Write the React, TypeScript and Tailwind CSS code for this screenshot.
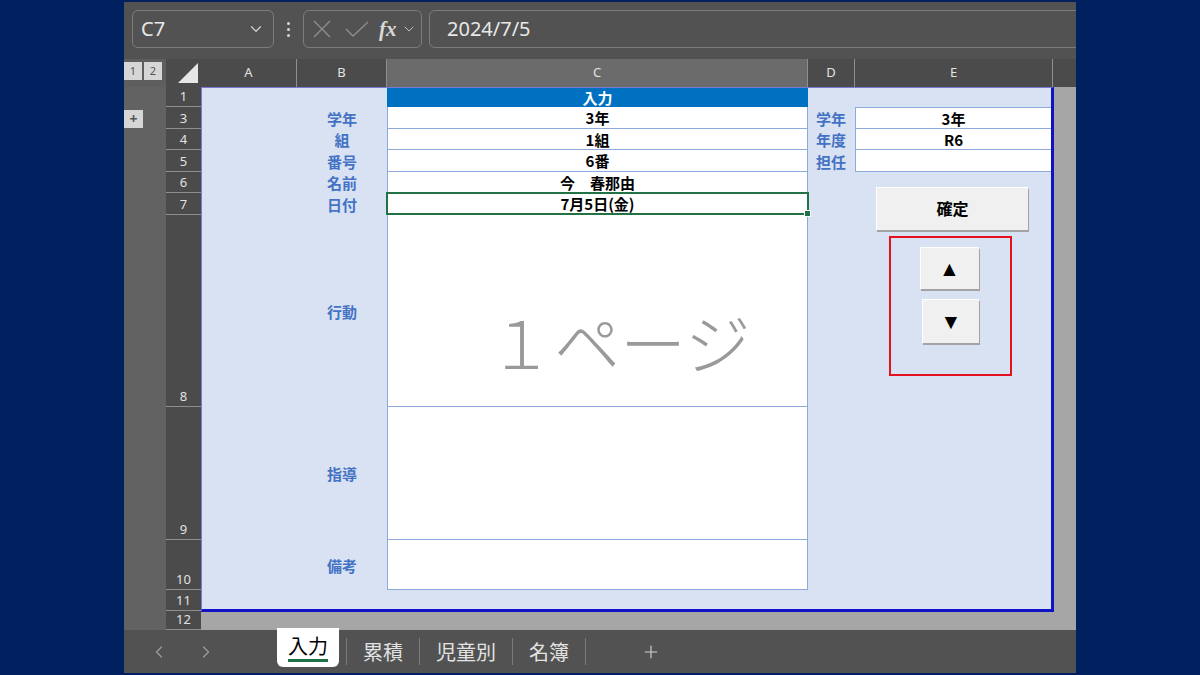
import { ChevronDown, ChevronLeft, ChevronRight, Plus } from "lucide-react";

const jp = "font-['Noto_Sans_CJK_JP',sans-serif]";
const ui = "font-['Noto_Sans','Noto_Sans_CJK_JP',sans-serif]";

const rowHeads = [
    { n: "1", h: "h-[20px]" },
    { n: "3", h: "h-[22px]" },
    { n: "4", h: "h-[21px]" },
    { n: "5", h: "h-[22px]" },
    { n: "6", h: "h-[21px]" },
    { n: "7", h: "h-[22px]" },
    { n: "8", h: "h-[192px]" },
    { n: "9", h: "h-[133px]" },
    { n: "10", h: "h-[50px]" },
    { n: "11", h: "h-[21px]" },
    { n: "12", h: "h-[19px]" },
];

const columns = [
    { name: "A", w: "w-[96px]", on: false },
    { name: "B", w: "w-[90px]", on: false },
    { name: "C", w: "w-[421px]", on: true },
    { name: "D", w: "w-[47px]", on: false },
    { name: "E", w: "w-[198px]", on: false },
];

interface Row {
    label: string;
    value: string;
    side?: string;
    sideValue?: string;
}

const rows: Row[] = [
    { label: "学年", value: "3年", side: "学年", sideValue: "3年" },
    { label: "組", value: "1組", side: "年度", sideValue: "R6" },
    { label: "番号", value: "6番", side: "担任", sideValue: "" },
    { label: "名前", value: "今　春那由" },
];

const sheets = ["累積", "児童別", "名簿"];

function Label({ text }: { text: string }) {
    return (
        <div className="flex items-center justify-center text-[15px] leading-none font-bold text-[#4472c4]">
            {text}
        </div>
    );
}

function FormulaBar() {
    return (
        <div className="flex h-[57px] shrink-0 items-start gap-0 bg-[#525252] pt-[8px] pl-[8px]">
            <div className="flex h-[38px] w-[142px] items-center justify-between rounded-[6px] border border-[#7c7c7c] pr-[8px] pl-[8px]">
                <span className={`${ui} text-[20px] text-[#e8e8e8]`}>C7</span>
                <ChevronDown className="h-[18px] w-[18px] text-[#d0d0d0]" strokeWidth={1.6} />
            </div>
            <div className="flex h-[38px] w-[29px] flex-col items-center justify-center gap-[3px]">
                <span className="h-[3px] w-[3px] rounded-full bg-[#d6d6d6]" />
                <span className="h-[3px] w-[3px] rounded-full bg-[#d6d6d6]" />
                <span className="h-[3px] w-[3px] rounded-full bg-[#d6d6d6]" />
            </div>
            <div className="flex h-[38px] w-[119px] items-center rounded-[6px] border border-[#7c7c7c] pl-[8px]">
                <svg width="20" height="20" viewBox="0 0 20 20" className="text-[#8d8d8d]">
                    <path d="M2 2 L18 18 M18 2 L2 18" stroke="currentColor" strokeWidth="1.4" fill="none" />
                </svg>
                <svg width="26" height="20" viewBox="0 0 26 20" className="ml-[12px] text-[#8d8d8d]">
                    <path d="M2 10 L9 17 L24 3" stroke="currentColor" strokeWidth="1.4" fill="none" />
                </svg>
                <span className="ml-[9px] font-['Liberation_Serif',serif] text-[21px] leading-none font-bold text-[#d8d8d8] italic">
                    fx
                </span>
                <ChevronDown className="ml-[4px] h-[16px] w-[16px] text-[#bdbdbd]" strokeWidth={1.5} />
            </div>
            <div className="ml-[7px] -mr-[20px] flex h-[38px] flex-1 items-center rounded-[6px] border border-[#7c7c7c] pl-[17px]">
                <span className={`${ui} text-[20px] text-[#e8e8e8]`}>2024/7/5</span>
            </div>
        </div>
    );
}

function ColumnHeader() {
    return (
        <div className={`${ui} flex h-[28px] shrink-0 bg-[#4b4b4b] text-[13px] text-[#e2e2e2]`}>
            <div className="flex w-[42px] items-start gap-[2px] bg-[#5e5e5e] pt-[3px]">
                <div className="flex h-[18px] w-[18px] items-center justify-center bg-[#d6d6d6] text-[11px] text-[#555]">1</div>
                <div className="flex h-[18px] w-[18px] items-center justify-center bg-[#d6d6d6] text-[11px] text-[#555]">2</div>
            </div>
            <div className="flex w-[35px] items-end justify-end pr-[3px] pb-[4px]">
                <svg width="20" height="20" viewBox="0 0 20 20">
                    <path d="M20 0 L20 20 L0 20 Z" fill="#e6e6e6" />
                </svg>
            </div>
            {columns.map((c) => (
                <div
                    key={c.name}
                    className={`flex ${c.w} items-center justify-center border-r border-[#8e8e8e] ${
                        c.on ? "bg-[#6b6b6b]" : ""
                    }`}
                >
                    {c.name}
                </div>
            ))}
        </div>
    );
}

function Sheet() {
    return (
        <div className="relative h-[525px] w-[853px] border-t border-l border-t-[#7a7ad6] border-l-[#7a7ad6] border-r-[3px] border-b-[3px] border-r-[#1111c6] border-b-[#1111c6] bg-[#d9e2f3]">
            <div className={`${jp} grid h-full grid-cols-[95px_90px_421px_47px_1fr] grid-rows-[19px_22px_21px_22px_21px_22px_192px_133px_50px_1fr]`}>
                {/* row 1 */}
                <div />
                <div />
                <div className="flex items-center justify-center bg-[#0070c0] text-[15px] leading-none font-bold text-white">
                    入力
                </div>
                <div />
                <div />

                {rows.map((r, i) => (
                    <div key={r.label} className="contents">
                        <div />
                        <Label text={r.label} />
                        <div className="flex items-center justify-center border-x border-b border-[#8eaadb] bg-white text-[15px] leading-none font-bold text-black">
                            {r.value}
                        </div>
                        {r.side ? (
                            <div className="flex items-center pl-[8px] text-[15px] leading-none font-bold text-[#4472c4]">
                                {r.side}
                            </div>
                        ) : (
                            <div />
                        )}
                        {r.side ? (
                            <div
                                className={`flex items-center justify-center border-l border-b border-[#8eaadb] bg-white text-[15px] leading-none font-bold text-black ${
                                    i === 0 ? "border-t" : ""
                                }`}
                            >
                                {r.sideValue}
                            </div>
                        ) : (
                            <div />
                        )}
                    </div>
                ))}

                {/* row 7 */}
                <div />
                <Label text="日付" />
                <div className="relative z-10 -mx-px -mt-px flex items-center justify-center border-2 border-[#217346] bg-white text-[15px] leading-none font-bold text-black">
                    7月5日(金)
                    <span className="absolute -right-[4px] -bottom-[4px] h-[7px] w-[7px] border border-white bg-[#217346]" />
                </div>
                <div />
                <div />

                {/* row 8 */}
                <div />
                <Label text="行動" />
                <div className="flex items-start border-x border-b border-[#8eaadb] bg-white pt-[92px] pl-[100px]">
                    <span className="text-[66px] leading-none font-light text-[#9a9a9a]">１ページ</span>
                </div>
                <div />
                <div />

                {/* row 9 */}
                <div />
                <Label text="指導" />
                <div className="border-x border-b border-[#8eaadb] bg-white" />
                <div />
                <div />

                {/* row 10 */}
                <div />
                <Label text="備考" />
                <div className="border-x border-b border-[#8eaadb] bg-white" />
                <div />
                <div />
            </div>

            {/* floating form controls */}
            <button className={`${jp} absolute top-[99px] left-[674px] flex h-[43px] w-[152px] items-center justify-center border-t border-l border-white bg-[#f0f0f0] pb-[3px] text-[16px] font-bold text-black shadow-[1px_2px_0_#a3a3a3]`}>
                確定
            </button>
            <div className="absolute top-[148px] left-[687px] flex h-[140px] w-[123px] flex-col items-center border-2 border-[#e3121c] pt-[9px]">
                <button className="ml-[-3px] flex h-[42px] w-[59px] items-center justify-center border-t border-l border-white bg-[#f0f0f0] text-[21px] leading-none text-black shadow-[1px_2px_0_#a3a3a3]">
                    ▲
                </button>
                <button className="mt-[10px] flex h-[44px] w-[57px] items-center justify-center border-t border-l border-white bg-[#f0f0f0] text-[21px] leading-none text-black shadow-[1px_2px_0_#a3a3a3]">
                    ▼
                </button>
            </div>
        </div>
    );
}

function Body() {
    return (
        <div className="flex h-[543px] shrink-0">
            <div className="flex w-[42px] flex-col bg-[#626262] pt-[23px]">
                <div className="flex h-[18px] w-[19px] items-center justify-center bg-[#d6d6d6] text-[14px] leading-none font-bold text-[#555]">
                    +
                </div>
            </div>
            <div className={`${ui} flex w-[35px] flex-col bg-[#4b4b4b] text-[13px] text-[#e2e2e2]`}>
                {rowHeads.map((r) => (
                    <div
                        key={r.n}
                        className={`flex ${r.h} items-end justify-center border-b border-[#8e8e8e] pb-[2px] leading-[16px]`}
                    >
                        {r.n}
                    </div>
                ))}
            </div>
            <div className="flex-1 bg-[#a6a6a6]">
                <Sheet />
            </div>
        </div>
    );
}

function TabBar() {
    return (
        <div className={`${jp} flex h-[43px] shrink-0 items-start bg-[#525252] text-[20px] text-[#e2e2e2]`}>
            <div className="flex h-[43px] w-[153px] items-center gap-[27px] pl-[25px] text-[#9c9c9c]">
                <ChevronLeft className="h-[20px] w-[20px]" strokeWidth={1.5} />
                <ChevronRight className="h-[20px] w-[20px]" strokeWidth={1.5} />
            </div>
            <div className="-mt-[2px] flex h-[39px] w-[62px] flex-col items-center justify-center rounded-b-[6px] bg-white text-black">
                <span className="border-b-[3px] border-[#1e7145] leading-[26px]">入力</span>
            </div>
            <div className="ml-[7px] flex h-[43px] items-center">
                {sheets.map((s) => (
                    <div key={s} className="flex items-center">
                        <span className="h-[27px] w-px bg-[#7a7a7a]" />
                        <span className="px-[16px]">{s}</span>
                    </div>
                ))}
                <span className="h-[27px] w-px bg-[#7a7a7a]" />
                <Plus className="ml-[55px] h-[20px] w-[20px] text-[#cfcfcf]" strokeWidth={1.4} />
            </div>
        </div>
    );
}

export default function App() {
    return (
        <div className="flex h-[675px] w-[1200px] justify-center overflow-hidden bg-[#01205f] pt-[2px]">
            <div className="flex h-[671px] w-[952px] flex-col overflow-hidden">
                <FormulaBar />
                <ColumnHeader />
                <Body />
                <TabBar />
            </div>
        </div>
    );
}
